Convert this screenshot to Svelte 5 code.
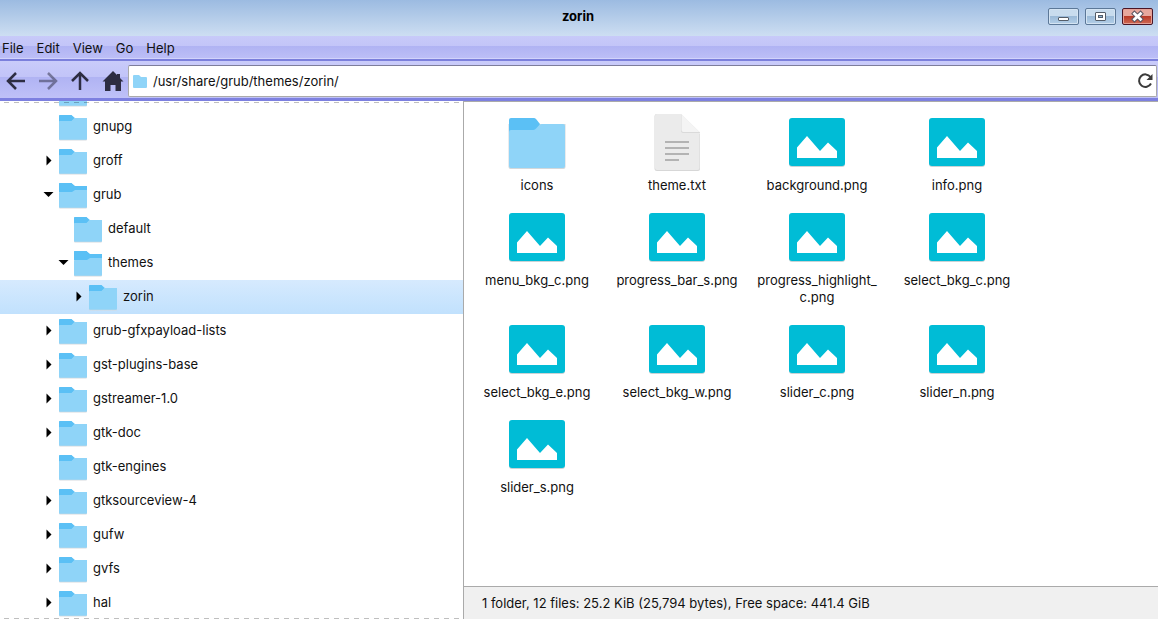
<script>
	let path = $state('/usr/share/grub/themes/zorin/');
	let selected = $state('zorin');

	const menus = ['File', 'Edit', 'View', 'Go', 'Help'];

	const tree = [
		{ name: 'gnupg', level: 0 },
		{ name: 'groff', level: 0, arrow: 'right' },
		{ name: 'grub', level: 0, arrow: 'down' },
		{ name: 'default', level: 1 },
		{ name: 'themes', level: 1, arrow: 'down' },
		{ name: 'zorin', level: 2, arrow: 'right' },
		{ name: 'grub-gfxpayload-lists', level: 0, arrow: 'right' },
		{ name: 'gst-plugins-base', level: 0, arrow: 'right' },
		{ name: 'gstreamer-1.0', level: 0, arrow: 'right' },
		{ name: 'gtk-doc', level: 0, arrow: 'right' },
		{ name: 'gtk-engines', level: 0 },
		{ name: 'gtksourceview-4', level: 0, arrow: 'right' },
		{ name: 'gufw', level: 0, arrow: 'right' },
		{ name: 'gvfs', level: 0, arrow: 'right' },
		{ name: 'hal', level: 0, arrow: 'right' }
	];

	const files = [
		{ name: 'icons', type: 'folder' },
		{ name: 'theme.txt', type: 'text' },
		{ name: 'background.png', type: 'image' },
		{ name: 'info.png', type: 'image' },
		{ name: 'menu_bkg_c.png', type: 'image' },
		{ name: 'progress_bar_s.png', type: 'image' },
		{ name: 'progress_highlight_c.png', type: 'image' },
		{ name: 'select_bkg_c.png', type: 'image' },
		{ name: 'select_bkg_e.png', type: 'image' },
		{ name: 'select_bkg_w.png', type: 'image' },
		{ name: 'slider_c.png', type: 'image' },
		{ name: 'slider_n.png', type: 'image' },
		{ name: 'slider_s.png', type: 'image' }
	];
</script>

{#snippet treeFolder(open)}
	<svg class="tree-folder" width="28" height="26" viewBox="0 0 28 26">
		<path d="M0 4h28v20.500q0 1-1 1H1q-1 0-1-1z" fill="#d5dade" />
		<path d="M0 1q0-1 1-1h11l4 3h12v6H0z" fill={open ? '#5bc0f5' : '#8fd4f8'} />
		<path d="M0 1q0-1 1-1h11.500l3 3-3 3.500H0z" fill="#5bc0f5" />
		{#if open}
			<path d="M0 10q0-1 1-1h12l3-2h12v17q0 .7-1 .7H1q-1 0-1-.7z" fill="#8fd4f8" />
		{:else}
			<path d="M0 7q0-1 1-1h11.500l3-3H27q1 0 1 1v20q0 .7-1 .7H1q-1 0-1-.7z" fill="#8fd4f8" />
		{/if}
	</svg>
{/snippet}

<div class="window">
	<header class="titlebar">
		<h1>zorin</h1>
		<div class="window-buttons">
			<button class="window-button" aria-label="Minimize">
				<svg width="29" height="15" viewBox="0 0 29 15">
					<rect x="9.500" y="8.500" width="10" height="3" rx=".5" fill="#fff" stroke="#545d69" />
				</svg>
			</button>
			<button class="window-button" aria-label="Maximize">
				<svg width="29" height="15" viewBox="0 0 29 15">
					<rect x="9.500" y="3.500" width="10" height="8" rx=".5" fill="#fff" stroke="#545d69" />
					<rect x="12.500" y="6.500" width="4" height="2" fill="#8fb4d4" stroke="#545d69" />
				</svg>
			</button>
			<button class="window-button close" aria-label="Close">
				<svg width="29" height="15" viewBox="0 0 29 15">
					<path d="M11.500 4.700l6 5.600M17.500 4.700l-6 5.600" stroke="#5c5561" stroke-width="4.800" stroke-linecap="square" />
					<path d="M11.500 4.700l6 5.600M17.500 4.700l-6 5.600" stroke="#fff" stroke-width="2.800" stroke-linecap="square" />
				</svg>
			</button>
		</div>
	</header>

	<nav class="menubar">
		{#each menus as menu}
			<button>{menu}</button>
		{/each}
	</nav>

	<div class="toolbar">
		<button class="tool" aria-label="Back">
			<svg width="20" height="20" viewBox="0 0 20 20">
				<path d="M19 10H2.500M10 2l-8 8 8 8" />
			</svg>
		</button>
		<button class="tool" aria-label="Forward" disabled>
			<svg width="20" height="20" viewBox="0 0 20 20">
				<path d="M1 10h16.500M10 2l8 8-8 8" />
			</svg>
		</button>
		<button class="tool" aria-label="Up">
			<svg width="20" height="20" viewBox="0 0 20 20">
				<path d="M10 19V2.500M2 10l8-8 8 8" />
			</svg>
		</button>
		<button class="tool home" aria-label="Home">
			<svg width="24" height="20" viewBox="-2 0 24 20">
				<path d="M11 0L.5 10.500h2.500V20h5.500v-6h5v6H19v-9.500h2.500L18 7V3h-3v1z" />
			</svg>
		</button>
		<div class="location">
			<svg width="14" height="13" viewBox="0 0 14 13">
				<path d="M0 1q0-1 1-1h5l2 2h5q1 0 1 1v9q0 1-1 1H1q-1 0-1-1z" fill="#8fd4f8" />
			</svg>
			<input type="text" aria-label="Location" bind:value={path} />
			<button class="reload" aria-label="Reload">
				<svg width="16" height="16" viewBox="0 0 16 16">
					<path d="M13.500 4A6.300 6.300 0 1 0 14 10.500" fill="none" stroke="#3b3b3b" stroke-width="2" />
					<path d="M15.500 1v6H9.500z" fill="#3b3b3b" />
				</svg>
			</button>
		</div>
	</div>

	<main>
		<aside>
			<ul class="tree">
				<li><span class="row"><span class="arrow"></span>{@render treeFolder(false)}</span></li>
				{#each tree as node}
					<li>
						<button
							class="row level-{node.level}"
							class:selected={selected === node.name}
							onclick={() => (selected = node.name)}
						>
							<span class="arrow">
								{#if node.arrow === 'right'}
									<svg width="10" height="10" viewBox="0 0 10 10"><path d="M3.500 0.500v10l5-5z" /></svg>
								{:else if node.arrow === 'down'}
									<svg width="10" height="10" viewBox="0 0 10 10"><path d="M0.500 3h10l-5 5z" /></svg>
								{/if}
							</span>
							{@render treeFolder(node.arrow === 'down')}
							<span>{node.name}</span>
						</button>
					</li>
				{/each}
			</ul>
		</aside>

		<section class="content">
			<ul class="files">
				{#each files as file}
					<li>
						<button class="file">
							<svg width="64" height="64" viewBox="0 0 64 64">
								{#if file.type === 'folder'}
									<path d="M3.500 14h57v43q0 2-2 2h-53q-2 0-2-2z" fill="#d3d8db" />
									<path d="M4 10q0-2 2-2h23q1 0 2 1l4 5-5 8H4z" fill="#5bc0f5" />
									<path d="M4 22q0-2 2-2h22q1.500 0 2.500-1l4-4q1-1 2.500-1h21q2 0 2 2v40q0 2-2 2H6q-2 0-2-2z" fill="#8fd4f8" />
								{:else if file.type === 'text'}
									<path d="M12 4h23l20 20v35q0 2-2 2H12q-2.500 0-2.500-2V6q0-2 2.500-2z" fill="#d7d7d7" />
									<path d="M12 4h24l18.500 18.500V58q0 2-2 2H12q-2 0-2-2V6q0-2 2-2z" fill="#ebebeb" />
									<path d="M36 4v17q0 2 2 2h17v-.5z" fill="#dadada" />
									<path d="M36.500 4v16q0 2 2 2H54.500z" fill="#f4f4f4" />
									<path d="M20 32h24M20 38h24M20 44h24M20 50h14" stroke="#b3b3b3" stroke-width="2" />
								{:else}
									<rect x="4" y="9" width="56" height="48" rx="3" fill="#c9d3d5" />
									<rect x="4" y="8" width="56" height="48" rx="3" fill="#00bcd6" />
									<path d="M12 48V37.500L22 26l13 15 8-8.500 9 8.500v7z" fill="#fff" />
								{/if}
							</svg>
							<span>{file.name}</span>
						</button>
					</li>
				{/each}
			</ul>
			<footer>1 folder, 12 files: 25.2 KiB (25,794 bytes), Free space: 441.4 GiB</footer>
		</section>
	</main>
</div>

<style>
	:global(body) {
		margin: 0;
	}

	.window {
		height: 100vh;
		display: flex;
		flex-direction: column;
		overflow: hidden;
		background: #fff;
		color: #111;
		font-family: Inter, 'Noto Sans', sans-serif;
		font-size: 13px;
		line-height: 17px;
	}

	button,
	input {
		font: inherit;
		color: inherit;
		margin: 0;
		padding: 0;
		border: 0;
		background: none;
	}

	svg {
		display: block;
		flex-shrink: 0;
	}

	ul {
		list-style: none;
		margin: 0;
		padding: 0;
	}

	.titlebar {
		height: 36px;
		flex-shrink: 0;
		display: grid;
		grid-template-columns: 1fr auto 1fr;
		box-sizing: border-box;
		padding: 8px 5px 0 3px;
		background: linear-gradient(#9cbbe1, #cddef2);
	}

	.titlebar h1 {
		grid-column: 2;
		margin: 0;
		font-size: 13px;
		font-weight: 700;
		color: #000;
	}

	.window-buttons {
		display: flex;
		justify-content: flex-end;
		align-items: flex-start;
		gap: 6px;
	}

	.window-button {
		border: 1px solid #5c7898;
		border-radius: 2px;
		background: linear-gradient(#c8dcee 0 45%, #9bbad8 50%, #b3cfe8);
		box-shadow: inset 0 0 0 1px #d4e4f3;
	}

	.window-button.close {
		border-color: #4a1526;
		background: linear-gradient(#e7a79d 0 45%, #b93a28 50%, #cf6a55);
		box-shadow: inset 0 0 0 1px #e5a096;
	}

	.menubar {
		height: 25px;
		box-sizing: border-box;
		flex-shrink: 0;
		display: flex;
		align-items: center;
		gap: 13px;
		padding: 2px 2px 0;
		border-bottom: 2px solid #7b7fdc;
		background: linear-gradient(#c8caf9, #c3c5f8 43%, #b0b3f3 44%, #bdbff7);
		box-shadow: inset 0 -1px #d2d3fb;
	}

	.toolbar {
		height: 40px;
		box-sizing: border-box;
		flex-shrink: 0;
		display: flex;
		align-items: center;
		padding: 3px 1px 0 0;
		border-bottom: 3px solid #7d80e0;
		background: linear-gradient(#c9cbfa, #c2c4f8 42%, #b0b3f3 43%, #bfc1f8);
	}

	.tool {
		width: 32px;
		display: flex;
		justify-content: center;
		fill: #2d2d42;
	}

	.tool path {
		stroke: #2d2d42;
		stroke-width: 2.5;
		fill: none;
	}

	.tool:disabled {
		opacity: 0.5;
	}

	.home path {
		fill: #2d2d42;
		stroke: none;
	}

	.location {
		flex: 1;
		height: 32px;
		box-sizing: border-box;
		display: flex;
		align-items: center;
		gap: 6px;
		padding: 0 3px 0 4px;
		border: 1px solid #aaa;
		border-top-color: #7d7d9c;
		border-radius: 2px;
		background: #fff;
	}

	.location input {
		flex: 1;
		outline: none;
	}

	main {
		flex: 1;
		min-height: 0;
		display: grid;
		grid-template-columns: 464px 1fr;
	}

	aside {
		position: relative;
		overflow: hidden;
		border-right: 1px solid #aaa;
	}

	aside::before,
	aside::after {
		content: '';
		position: absolute;
		left: 4px;
		right: 0;
		height: 1px;
		background: repeating-linear-gradient(90deg, rgb(0 0 0 / 25%) 0 5px, transparent 5px 10px);
	}

	aside::before {
		top: 1px;
	}

	aside::after {
		bottom: 0;
	}

	/* the list is scrolled, so its first row is partly hidden */
	.tree {
		margin-top: -25px;
	}

	.row {
		width: 100%;
		height: 34px;
		box-sizing: border-box;
		display: flex;
		align-items: center;
		gap: 6px;
		padding: 0 0 2px 43px;
		text-align: left;
	}

	.row.level-1 {
		padding-left: 58px;
	}

	.row.level-2 {
		padding-left: 73px;
	}

	.row.selected {
		background: linear-gradient(#d6eafe, #c1e1fd);
	}

	.arrow {
		width: 10px;
		height: 10px;
		flex-shrink: 0;
	}

	.arrow svg {
		overflow: visible;
	}

	.tree-folder {
		padding-top: 4px;
	}

	.content {
		display: flex;
		flex-direction: column;
		min-width: 0;
		border-top: 1px solid #aaa;
	}

	.files {
		flex: 1;
		display: grid;
		grid-template-columns: repeat(auto-fill, 140px);
		align-content: start;
		row-gap: 11px;
		padding: 8px 111px 0 3px;
	}

	.file {
		width: 100%;
		display: flex;
		flex-direction: column;
		align-items: center;
		gap: 3px;
	}

	.file span {
		width: 126px;
		overflow-wrap: break-word;
	}

	footer {
		box-sizing: border-box;
		height: 33px;
		padding: 8px 18px;
		border-top: 1px solid #aaa;
		background: #f0f0f0;
	}
</style>
